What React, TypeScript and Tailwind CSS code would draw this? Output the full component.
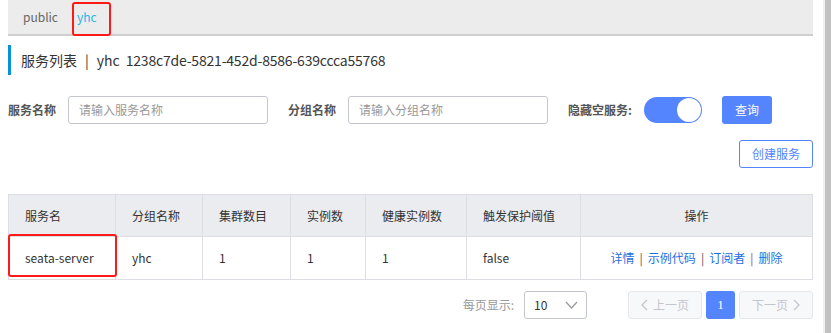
import React from "react";

const F = { fontFamily: '"Noto Sans CJK SC", "Noto Sans", sans-serif' };

function Th({ children, w, center }: { children?: React.ReactNode; w: string; center?: boolean }) {
  return (
    <div className={`${w} h-full flex items-center border-r border-[#dcdee3] last:border-r-0 ${center ? "justify-center" : "pl-[16px]"}`}>
      {children}
    </div>
  );
}

export default function App() {
  const cols = ["w-[107px]", "w-[87px]", "w-[88px]", "w-[75px]", "w-[101px]", "w-[114px]", "flex-1"];
  return (
    <div className="w-[831px] h-[333px] bg-white flex text-[#333] overflow-hidden" style={F}>
      <div className="flex-1 pl-[8px] pr-[10px] flex flex-col">
        {/* tabs */}
        <div className="h-[36px] bg-[#ececec] border-b-2 border-[#cfcfcf] flex items-center text-[12px]">
          <span className="ml-[15px] text-[#666]">public</span>
          <span className="ml-[14px] w-px h-[12px] bg-[#f0d9a8]"></span>
          <div className="relative h-full flex items-center">
            <span className="ml-[4px] text-[#27b6ea]">yhc</span>
            <div className="absolute left-[-1px] top-[2px] w-[39px] h-[34px] border-2 border-[#ff1a1a] rounded-[3px]"></div>
          </div>
        </div>
        {/* title */}
        <div className="mt-[9px] h-[30px] flex items-center border-l-[3px] border-[#0593d6] pl-[10px] text-[14px] text-[#333]">
          <span>服务列表</span>
          <span className="mx-[8px]">|</span>
          <span>yhc</span>
          <span className="ml-[6px] tracking-[-0.2px]">1238c7de-5821-452d-8586-639ccca55768</span>
        </div>
        {/* filter row */}
        <div className="mt-[21px] h-[28px] flex items-center text-[12px]">
          <span className="font-bold text-[#555] w-[60px]">服务名称</span>
          <div className="w-[200px] h-[28px] border border-[#c4c6cf] rounded-[3px] flex items-center pl-[10px] text-[#999]">请输入服务名称</div>
          <span className="font-bold text-[#555] ml-[20px] w-[60px]">分组名称</span>
          <div className="w-[200px] h-[28px] border border-[#c4c6cf] rounded-[3px] flex items-center pl-[10px] text-[#999]">请输入分组名称</div>
          <span className="font-bold text-[#555] ml-[20px] w-[76px]">隐藏空服务:</span>
          <div className="w-[58px] h-[26px] rounded-full bg-[#5584ff] relative">
            <div className="absolute right-[1px] top-[1px] w-[24px] h-[24px] rounded-full bg-white"></div>
          </div>
          <div className="ml-[20px] w-[50px] h-[28px] rounded-[3px] bg-[#5584ff] text-white flex items-center justify-center">查询</div>
        </div>
        <div className="mt-[16px] flex justify-end">
          <div className="w-[74px] h-[28px] border border-[#5584ff] rounded-[3px] text-[#5584ff] text-[12px] flex items-center justify-center">创建服务</div>
        </div>
        {/* table */}
        <div className="mt-[26px] border border-[#dcdee3] text-[12px]">
          <div className="h-[42px] bg-[#ebecf0] flex border-b border-[#dcdee3]">
            {["服务名", "分组名称", "集群数目", "实例数", "健康实例数", "触发保护阈值"].map((t, i) => (
              <Th key={i} w={cols[i]}>{t}</Th>
            ))}
            <Th w="flex-1" center>操作</Th>
          </div>
          <div className="h-[42px] flex">
            <div className={`${cols[0]} h-full flex items-center pl-[16px] border-r border-[#dcdee3] relative`}>
              seata-server
              <div className="absolute left-[-1px] top-[-3px] w-[109px] h-[43px] border-2 border-[#ff1a1a] rounded-[3px]"></div>
            </div>
            {["yhc", "1", "1", "1", "false"].map((t, i) => (
              <Th key={i} w={cols[i + 1]}>{t}</Th>
            ))}
            <div className="flex-1 h-full flex items-center justify-center text-[#1f6fe0]">
              <span>详情</span>
              <span className="mx-[5px] text-[#555]">|</span>
              <span>示例代码</span>
              <span className="mx-[5px] text-[#555]">|</span>
              <span>订阅者</span>
              <span className="mx-[5px] text-[#a0522d]">|</span>
              <span>删除</span>
            </div>
          </div>
        </div>
        {/* pagination */}
        <div className="mt-[11px] flex items-center justify-end text-[12px]">
          <span className="text-[#999]">每页显示:</span>
          <div className="ml-[10px] w-[63px] h-[28px] border border-[#c4c6cf] rounded-[3px] flex items-center justify-between pl-[9px] pr-[8px] text-[#333]">
            <span>10</span>
            <svg width="13" height="8" viewBox="0 0 13 8" fill="none" stroke="#999" strokeWidth="1.2"><path d="M1 1l5.5 6L12 1" /></svg>
          </div>
          <div className="ml-[41px] w-[74px] h-[28px] border border-[#e6e7eb] bg-[#f7f8fa] rounded-[3px] flex items-center justify-center text-[#c4c6cf] gap-[5px]">
            <svg width="7" height="12" viewBox="0 0 7 12" fill="none" stroke="#c4c6cf" strokeWidth="1.3"><path d="M6 1L1 6l5 5" /></svg>
            <span>上一页</span>
          </div>
          <div className="ml-[4px] w-[29px] h-[28px] bg-[#5584ff] rounded-[3px] text-white flex items-center justify-center text-[13px]" style={{ fontFamily: '"Liberation Serif", serif' }}>1</div>
          <div className="ml-[4px] w-[74px] h-[28px] border border-[#e6e7eb] bg-[#f7f8fa] rounded-[3px] flex items-center justify-center text-[#c4c6cf] gap-[5px]">
            <span>下一页</span>
            <svg width="7" height="12" viewBox="0 0 7 12" fill="none" stroke="#c4c6cf" strokeWidth="1.3"><path d="M1 1l5 5-5 5" /></svg>
          </div>
        </div>
      </div>
      <div className="w-[8px] flex">
        <div className="w-[2px] bg-[#f1f1f1]"></div>
        <div className="flex-1 bg-[#c1c1c1]"></div>
      </div>
    </div>
  );
}
